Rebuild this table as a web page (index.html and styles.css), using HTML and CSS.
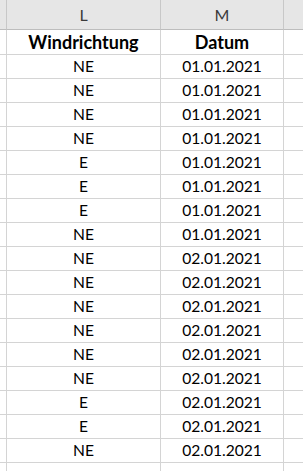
FILE: index.html
```html
<!DOCTYPE html>
<html>
<head>
<meta charset="utf-8">
<link rel="stylesheet" href="styles.css">
</head>
<body>
<div class="sheet">
  <div class="row head"><div class="c k"></div><div class="c l">L</div><div class="c m">M</div><div class="c n"></div></div>
  <div class="row title"><div class="c k"></div><div class="c l">Windrichtung</div><div class="c m">Datum</div><div class="c n"></div></div>
  <div class="row"><div class="c k"></div><div class="c l">NE</div><div class="c m">01.01.2021</div><div class="c n"></div></div>
  <div class="row"><div class="c k"></div><div class="c l">NE</div><div class="c m">01.01.2021</div><div class="c n"></div></div>
  <div class="row"><div class="c k"></div><div class="c l">NE</div><div class="c m">01.01.2021</div><div class="c n"></div></div>
  <div class="row"><div class="c k"></div><div class="c l">NE</div><div class="c m">01.01.2021</div><div class="c n"></div></div>
  <div class="row"><div class="c k"></div><div class="c l">E</div><div class="c m">01.01.2021</div><div class="c n"></div></div>
  <div class="row"><div class="c k"></div><div class="c l">E</div><div class="c m">01.01.2021</div><div class="c n"></div></div>
  <div class="row"><div class="c k"></div><div class="c l">E</div><div class="c m">01.01.2021</div><div class="c n"></div></div>
  <div class="row"><div class="c k"></div><div class="c l">NE</div><div class="c m">01.01.2021</div><div class="c n"></div></div>
  <div class="row"><div class="c k"></div><div class="c l">NE</div><div class="c m">02.01.2021</div><div class="c n"></div></div>
  <div class="row"><div class="c k"></div><div class="c l">NE</div><div class="c m">02.01.2021</div><div class="c n"></div></div>
  <div class="row"><div class="c k"></div><div class="c l">NE</div><div class="c m">02.01.2021</div><div class="c n"></div></div>
  <div class="row"><div class="c k"></div><div class="c l">NE</div><div class="c m">02.01.2021</div><div class="c n"></div></div>
  <div class="row"><div class="c k"></div><div class="c l">NE</div><div class="c m">02.01.2021</div><div class="c n"></div></div>
  <div class="row"><div class="c k"></div><div class="c l">NE</div><div class="c m">02.01.2021</div><div class="c n"></div></div>
  <div class="row"><div class="c k"></div><div class="c l">E</div><div class="c m">02.01.2021</div><div class="c n"></div></div>
  <div class="row"><div class="c k"></div><div class="c l">E</div><div class="c m">02.01.2021</div><div class="c n"></div></div>
  <div class="row"><div class="c k"></div><div class="c l">NE</div><div class="c m">02.01.2021</div><div class="c n"></div></div>
  <div class="row"><div class="c k"></div><div class="c l"></div><div class="c m"></div><div class="c n"></div></div>
</div>
</body>
</html>
```
FILE: styles.css
```css
html, body {
  margin: 0;
  padding: 0;
  background: #ffffff;
  overflow: hidden;
}
.sheet {
  width: 303px;
  font-family: Lato, "Open Sans", sans-serif;
  font-size: 15.6px;
  color: #000;
}
.row {
  display: flex;
  height: 24px;
}
.c {
  box-sizing: border-box;
  border-right: 1px solid #d4d4d4;
  border-bottom: 1px solid #d4d4d4;
  display: flex;
  align-items: center;
  justify-content: center;
  line-height: 1;
  white-space: nowrap;
}
.k { width: 7px; }
.l { width: 154px; }
.m { width: 123px; }
.n { flex: 1; border-right: none; }
.head {
  height: 30px;
  background: #e6e6e6;
  color: #3a3a3a;
  font-size: 16px;
}
.head .c {
  border-bottom-color: #bdbdbd;
  border-right-color: #c8c8c8;
}
.title {
  height: 25px;
  font-weight: bold;
  font-size: 18px;
}
```
